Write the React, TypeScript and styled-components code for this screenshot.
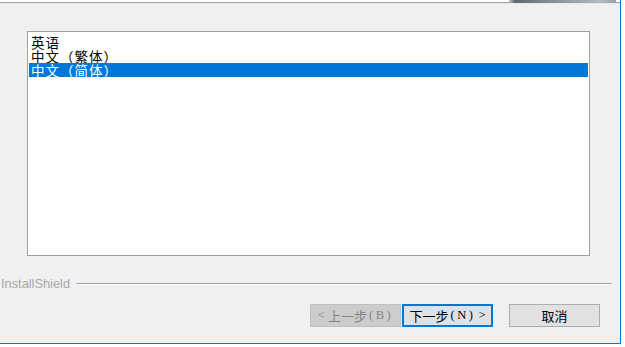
import React from "react";
import styled, { createGlobalStyle } from "styled-components";

const Global = createGlobalStyle`
  html, body { margin: 0; padding: 0; background: #ffffff; }
  body { width: 625px; height: 347px; overflow: hidden; }
`;

const Window = styled.div`
  width: 620px;
  height: 343px;
  background: #f0f0f0;
  border-right: 1px solid #0078d7;
  border-bottom: 1px solid #0078d7;
  display: flex;
  flex-direction: column;
  font-family: "Noto Sans CJK SC", "Noto Sans", sans-serif;
`;

const Header = styled.div`
  height: 2px;
  background: #ffffff;
  display: flex;
  justify-content: flex-end;
  padding-right: 4px;
  border-bottom: 1px solid #a0a0a0;
  box-shadow: 0 1px 0 #e6e6e6;
`;

const Banner = styled.div`
  width: 107px;
  height: 3px;
  background: linear-gradient(90deg, #b9bec4 0%, #5e6872 6%, #7b858e 30%, #99a2aa 60%, #b3b9bf 85%, #9aa2aa 100%);
`;

const ListBox = styled.div`
  margin: 28px 0 0 27px;
  width: 559px;
  height: 220px;
  background: #ffffff;
  border: 1px solid #a0a0a0;
  padding: 3px 1px 0 1px;
  box-sizing: content-box;
  display: flex;
  flex-direction: column;
`;

const Item = styled.div<{ $selected?: boolean }>`
  height: 14px;
  line-height: 14px;
  font-size: 13.5px;
  letter-spacing: 1px;
  padding-left: 2px;
  color: ${(p) => (p.$selected ? "#ffffff" : "#000000")};
  background: ${(p) => (p.$selected ? "#0078d7" : "transparent")};
  white-space: nowrap;
`;

const BrandRow = styled.div`
  margin: 21px 0 0 1px;
  width: 611px;
  height: 14px;
  display: flex;
  align-items: center;
  gap: 6px;
`;

const Brand = styled.span`
  font-family: "Liberation Sans", Arial, sans-serif;
  font-size: 12.8px;
  color: #a8a8a8;
  line-height: 14px;
`;

const Rule = styled.div`
  flex: 1;
  height: 1px;
  background: #a0a0a0;
  border-bottom: 1px solid #ffffff;
`;

const ButtonRow = styled.div`
  margin: 13px 20px 0 0;
  display: flex;
  justify-content: flex-end;
`;

const Button = styled.div<{ $variant?: "disabled" | "default" | "normal"; $gap?: number }>`
  width: 91px;
  height: 23px;
  box-sizing: border-box;
  margin-left: ${(p) => p.$gap ?? 0}px;
  display: flex;
  align-items: center;
  justify-content: center;
  font-family: "Liberation Serif", "Noto Sans CJK SC", serif;
  font-size: 12.5px;
  white-space: nowrap;
  background: ${(p) => (p.$variant === "disabled" ? "#cccccc" : "#e1e1e1")};
  color: ${(p) => (p.$variant === "disabled" ? "#838383" : "#000000")};
  border: ${(p) =>
    p.$variant === "default"
      ? "2px solid #0078d7"
      : p.$variant === "disabled"
      ? "1px solid #bfbfbf"
      : "1px solid #adadad"};
`;

const Cjk = styled.span`
  font-family: "Noto Sans CJK SC", sans-serif;
  font-size: 13px;
`;

const Mnemonic = styled.span`
  letter-spacing: 2.5px;
  margin-left: 2px;
`;

export default function App() {
  return (
    <>
      <Global />
      <Window>
        <Header>
          <Banner />
        </Header>
        <ListBox>
          <Item>英语</Item>
          <Item>中文（繁体）</Item>
          <Item $selected>中文（简体）</Item>
        </ListBox>
        <BrandRow>
          <Brand>InstallShield</Brand>
          <Rule />
        </BrandRow>
        <ButtonRow>
          <Button $variant="disabled">
            &lt;&nbsp;<Cjk>上一步</Cjk>
            <Mnemonic>(B)</Mnemonic>
          </Button>
          <Button $variant="default" $gap={1}>
            <Cjk>下一步</Cjk>
            <Mnemonic>(N)</Mnemonic>&nbsp;&gt;
          </Button>
          <Button $variant="normal" $gap={16}>
            <Cjk>取消</Cjk>
          </Button>
        </ButtonRow>
      </Window>
    </>
  );
}
